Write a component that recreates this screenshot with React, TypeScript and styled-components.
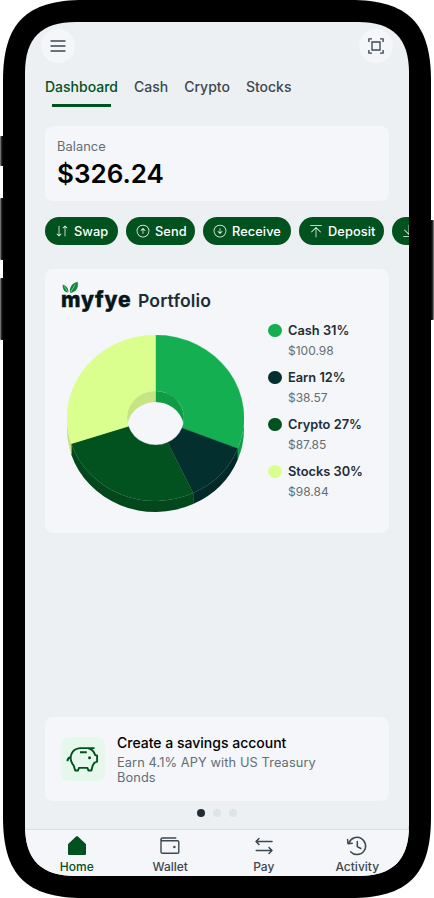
import React from 'react';
import styled, { createGlobalStyle } from 'styled-components';
import {
  PiArrowsDownUpLight,
  PiArrowCircleUpLight,
  PiArrowCircleDownLight,
  PiArrowLineUpLight,
  PiArrowLineDownLight,
} from 'react-icons/pi';

const c = {
  bg: '#ecf0f3',
  card: '#f4f6fa',
  green: '#02521f',
  ink: '#212d36',
  slate: '#3c4850',
  muted: '#636e74',
};

const GlobalStyle = createGlobalStyle`
  * { box-sizing: border-box; }
  body { margin: 0; background: #fff; font-family: Inter, 'Liberation Sans', sans-serif; }
  button { font: inherit; border: 0; padding: 0; background: none; }
  svg { display: block; flex: none; }
  h1, h2, p { margin: 0; }
`;

const Stage = styled.div`
  position: relative;
  width: 434px;
  height: 898px;
  overflow: hidden;
`;

const SideKey = styled.i<{ $side: 'left' | 'right'; $top: number; $length: number }>`
  position: absolute;
  ${p => p.$side}: 0;
  top: ${p => p.$top}px;
  width: 4px;
  height: ${p => p.$length}px;
  border-radius: 1px;
  background: linear-gradient(to ${p => p.$side}, #000 25%, #333 70%, #999 100%);
`;

const Bezel = styled.div`
  position: relative;
  width: 428px;
  height: 898px;
  margin-left: 3px;
  padding: 22px;
  background: #000;
  clip-path: path('M0 81C0 23 23 0 81 0H347C405 0 428 23 428 81V817C428 875 405 898 347 898H81C23 898 0 875 0 817Z');
`;

const Screen = styled.main`
  display: flex;
  flex-direction: column;
  width: 384px;
  height: 854px;
  background: ${c.bg};
  clip-path: path('M0 51C0 16 16 0 51 0H333C368 0 384 16 384 51V803C384 838 368 854 333 854H51C16 854 0 838 0 803Z');
`;

const Header = styled.header`
  display: flex;
  justify-content: space-between;
  padding: 7px 16px 0;
`;

const RoundButton = styled.button`
  display: grid;
  place-items: center;
  width: 34px;
  height: 34px;
  border-radius: 50%;
  background: ${c.card};
  color: ${c.slate};
`;

const Tabs = styled.nav`
  display: flex;
  gap: 16px;
  height: 44px;
  padding: 14px 20px 0;
`;

const Tab = styled.button<{ $active?: boolean }>`
  display: flex;
  flex-direction: column;
  align-items: center;
  justify-content: space-between;
  height: 30px;
  font-size: 14px;
  line-height: 20px;
  font-weight: 500;
  white-space: nowrap;
  color: ${p => (p.$active ? c.green : c.slate)};
  &::after {
    content: '';
    width: 59px;
    height: 3px;
    margin: 0 -20px;
    background: ${p => (p.$active ? c.green : 'transparent')};
  }
`;

const Balance = styled.section`
  height: 75px;
  margin: 19px 20px 0;
  padding: 12px;
  border-radius: 8px;
  background: ${c.card};
`;

const BalanceLabel = styled.p`
  font-size: 12.8px;
  line-height: 18px;
  letter-spacing: 0.08px;
  color: ${c.muted};
`;

const BalanceValue = styled.h1`
  margin-top: 1px;
  font-size: 26px;
  line-height: 34px;
  font-weight: 600;
  color: #000;
`;

const Actions = styled.div`
  display: flex;
  gap: 8px;
  margin-top: 16px;
  padding-left: 20px;
  overflow: hidden;
`;

const Action = styled.button<{ $width: number }>`
  display: flex;
  align-items: center;
  flex: none;
  gap: 4px;
  width: ${p => p.$width}px;
  height: 28px;
  padding-left: 9px;
  border-radius: 14px;
  background: ${c.green};
  color: #fff;
  font-size: 12.8px;
  font-weight: 500;
  letter-spacing: 0.08px;
`;

const Portfolio = styled.section`
  height: 264px;
  margin: 24px 20px 0;
  padding: 12px 16px;
  border-radius: 8px;
  background: ${c.card};
`;

const PortfolioHead = styled.div`
  display: flex;
  height: 40px;
`;

const Logo = styled.div`
  position: relative;
  width: 77px;
  padding-top: 5px;
  color: #06171a;
  font-size: 21px;
  line-height: 28px;
  font-weight: 800;
  letter-spacing: 0.85px;
  -webkit-text-stroke: 0.4px #06171a;
`;

const Leaves = styled.svg`
  position: absolute;
  left: 0;
  top: 0;
`;

const PortfolioTitle = styled.h2`
  padding-top: 8px;
  font-size: 17.6px;
  line-height: 24px;
  font-weight: 600;
  letter-spacing: 0.12px;
  color: ${c.ink};
`;

const ChartRow = styled.div`
  display: flex;
`;

const Donut = styled.svg`
  margin: 14px 0 0 6px;
`;

const Legend = styled.ul`
  display: grid;
  grid-auto-rows: 47px;
  margin: 0 0 0 24px;
  padding: 0;
  list-style: none;
`;

const LegendItem = styled.li`
  display: grid;
  grid-template-columns: 14px auto;
  column-gap: 6px;
  align-content: start;
  align-items: center;
`;

const Swatch = styled.i<{ $color: string }>`
  width: 13.5px;
  height: 13.5px;
  margin-top: -1px;
  border-radius: 50%;
  background: ${p => p.$color};
`;

const LegendName = styled.span`
  font-size: 12.8px;
  line-height: 20px;
  font-weight: 600;
  color: ${c.ink};
`;

const LegendValue = styled.span`
  grid-column: 2;
  font-size: 12px;
  line-height: 19px;
  color: ${c.muted};
`;

const Promo = styled.section`
  display: flex;
  align-items: center;
  gap: 12px;
  height: 84px;
  margin: auto 20px 0;
  padding: 0 16px;
  border-radius: 8px;
  background: ${c.card};
`;

const PromoIcon = styled.div`
  display: grid;
  place-items: center;
  width: 44px;
  height: 44px;
  border-radius: 8px;
  background: #e5f8eb;
`;

const PromoTitle = styled.h2`
  font-size: 14px;
  line-height: 20px;
  font-weight: 500;
  color: #000;
`;

const PromoText = styled.p`
  width: 220px;
  margin-top: 2px;
  font-size: 12.8px;
  line-height: 15px;
  letter-spacing: 0.1px;
  color: ${c.muted};
`;

const Dots = styled.div`
  display: flex;
  justify-content: center;
  gap: 8px;
  padding: 8px 0 12px;
`;

const Dot = styled.i<{ $active?: boolean }>`
  width: 8px;
  height: 8px;
  border-radius: 50%;
  background: ${p => (p.$active ? c.ink : '#dde4e7')};
`;

const BottomNav = styled.nav`
  display: grid;
  grid-template-columns: repeat(4, 1fr);
  height: 47px;
  padding: 4px 5px 0;
  border-top: 1px solid #d9e0e4;
  background: ${c.card};
`;

const NavItem = styled.button<{ $active?: boolean }>`
  display: flex;
  flex-direction: column;
  align-items: center;
  color: ${p => (p.$active ? c.green : c.slate)};
  font-size: 12px;
  line-height: 16px;
  font-weight: 500;
  & > span { margin-top: 1px; }
`;

const actions = [
  { label: 'Swap', width: 73, Icon: PiArrowsDownUpLight },
  { label: 'Send', width: 69, Icon: PiArrowCircleUpLight },
  { label: 'Receive', width: 88, Icon: PiArrowCircleDownLight },
  { label: 'Deposit', width: 85, Icon: PiArrowLineUpLight },
];

const holdings = [
  { name: 'Cash', pct: 31, value: '$100.98', color: '#14af50', shade: '#109c45' },
  { name: 'Earn', pct: 12, value: '$38.57', color: '#03302e', shade: '#022827' },
  { name: 'Crypto', pct: 27, value: '$87.85', color: '#025220', shade: '#02481c' },
  { name: 'Stocks', pct: 30, value: '$98.84', color: '#dbff8f', shade: '#c6e482' },
];

const CX = 88.5, CY = 83, RX = 88.5, RY = 83, HX = 28.5, HY = 27, DEPTH = 11;
const pt = (deg: number, rx: number, ry: number, dy = 0) => {
  const a = (deg * Math.PI) / 180;
  return `${(CX + rx * Math.sin(a)).toFixed(2)} ${(CY + dy - ry * Math.cos(a)).toFixed(2)}`;
};

function PortfolioChart() {
  let sum = 0;
  const slices = holdings.map(h => {
    const from = sum * 3.6;
    sum += h.pct;
    return { ...h, from, to: sum * 3.6 };
  });
  return (
    <Donut width="177" height="178" viewBox="0 0 177 178">
      {slices.map(s => {
        const a = Math.max(s.from, 90);
        const b = Math.min(s.to, 270);
        return (
          <path key={s.name} fill={s.shade}
            d={`M${pt(a, RX, RY)}A${RX} ${RY} 0 0 1 ${pt(b, RX, RY)}L${pt(b, RX, RY, DEPTH)}A${RX} ${RY} 0 0 0 ${pt(a, RX, RY, DEPTH)}Z`} />
        );
      })}
      {slices.map(s => (
        <path key={s.name} fill={s.color} stroke={s.color} strokeWidth=".3"
          d={`M${pt(s.from, RX, RY)}A${RX} ${RY} 0 0 1 ${pt(s.to, RX, RY)}L${pt(s.to, HX, HY)}A${HX} ${HY} 0 0 0 ${pt(s.from, HX, HY)}Z`} />
      ))}
      <path fill={holdings[0].shade} d="M88.5 56A28.5 27 0 0 1 116.4 88.5A28.5 27 0 0 0 88.5 67Z" />
      <path fill={holdings[3].shade} d="M88.5 56A28.5 27 0 0 0 60.6 88.5A28.5 27 0 0 1 88.5 67Z" />
    </Donut>
  );
}

const MenuIcon = () => (
  <svg width="16" height="14" viewBox="0 0 16 14" fill="none" stroke="currentColor" strokeWidth="1.3" strokeLinecap="round">
    <path d="M1 2h14M1 7h14M1 12h14" />
  </svg>
);

const ScanIcon = () => (
  <svg width="18" height="18" viewBox="0 0 18 18" fill="none" stroke="currentColor" strokeWidth="1.35">
    <path d="M1.9 5V1.9H5M13 1.9h3.1V5M16.1 13v3.1H13M5 16.1H1.9V13M5 5h8v8H5z" />
  </svg>
);

const PiggyIcon = () => (
  <svg width="34" height="28" viewBox="0 0 34 28" fill="none" stroke={c.green} strokeWidth="1.9" strokeLinejoin="round">
    <path d="M1.4 16.3c.1-2.6 1.5-3.8 3.2-4M28.5 3.1H15C7.5 3.1 4.6 8.6 4.6 13.5c0 3.4 1.9 5.2 3.1 7.1l1.5 4.9h2.8l1-2.6h8.4l1 2.6h3l1.3-5 1.9-2.9 2.5-.9V10.6l-2-.6C27.9 6.3 25.4 3.8 22.3 3.2M14 7.2h6.8" />
    <circle cx="23.5" cy="12.8" r="1.5" fill={c.green} stroke="none" />
  </svg>
);

const HomeIcon = () => (
  <svg width="24" height="24" viewBox="0 0 24 24" fill="currentColor">
    <path d="M12 2.2c.35 0 .7.14.95.39l7.65 7.26c.25.24.4.6.4.95V20a1 1 0 0 1-1 1H4a1 1 0 0 1-1-1v-9.2c0-.35.15-.71.4-.95l7.65-7.26c.25-.25.6-.39.95-.39Z" />
  </svg>
);

const WalletIcon = () => (
  <svg width="24" height="24" viewBox="0 0 24 24" fill="none" stroke="currentColor" strokeWidth="1.4" strokeLinecap="round">
    <path d="M17.8 4H4.5C3.5 4 3 4.5 3 5.3s.5 1.5 1.5 1.5h15c.9 0 1.3.4 1.3 1.2v10c0 .9-.4 1.3-1.3 1.3h-15c-1 0-1.5-.5-1.5-1.4V5.3" />
    <circle cx="16.4" cy="13" r="1.25" fill="currentColor" stroke="none" />
  </svg>
);

const PayIcon = () => (
  <svg width="24" height="24" viewBox="0 0 24 24" fill="none" stroke="currentColor" strokeWidth="1.5" strokeLinecap="round" strokeLinejoin="round">
    <path d="M20 7.5H4.2M7 4.5l-3 3 3 3M4.2 16.5H20M17 13.5l3 3-3 3" />
  </svg>
);

const ActivityIcon = () => (
  <svg width="24" height="24" viewBox="0 0 24 24" fill="none" stroke="currentColor" strokeWidth="1.5" strokeLinecap="round" strokeLinejoin="round">
    <path d="M5.8 17.9A8.6 8.6 0 1 0 4.1 8.7M2.6 5.5l.4 4.2 4.2-.4M12.3 7.5v5.2l3.5 1.8" />
  </svg>
);

const navItems = [
  { label: 'Home', Icon: HomeIcon },
  { label: 'Wallet', Icon: WalletIcon },
  { label: 'Pay', Icon: PayIcon },
  { label: 'Activity', Icon: ActivityIcon },
];

export default function App() {
  return (
    <Stage>
      <GlobalStyle />
      <SideKey $side="left" $top={136} $length={30} />
      <SideKey $side="left" $top={198} $length={62} />
      <SideKey $side="left" $top={278} $length={62} />
      <SideKey $side="right" $top={220} $length={100} />
      <Bezel>
        <Screen>
          <Header>
            <RoundButton aria-label="Menu"><MenuIcon /></RoundButton>
            <RoundButton aria-label="Scan"><ScanIcon /></RoundButton>
          </Header>
          <Tabs>
            {['Dashboard', 'Cash', 'Crypto', 'Stocks'].map((t, i) => (
              <Tab key={t} $active={i === 0}>{t}</Tab>
            ))}
          </Tabs>
          <Balance>
            <BalanceLabel>Balance</BalanceLabel>
            <BalanceValue>$326.24</BalanceValue>
          </Balance>
          <Actions>
            {actions.map(({ label, width, Icon }) => (
              <Action key={label} $width={width}><Icon size={16} />{label}</Action>
            ))}
            <Action $width={96} aria-label="Withdraw"><PiArrowLineDownLight size={16} /></Action>
          </Actions>
          <Portfolio>
            <PortfolioHead>
              <Logo>
                myfye
                <Leaves width="18" height="15" viewBox="0 0 18 15" fill="#12863c">
                  <path d="M7.2 11.6C2.8 10.8 1.5 7.9 1.7 3.4 5.7 5 8 7.5 7.2 11.6Z" />
                  <path d="M9 12.2C8.1 6.9 10.6 2.3 16.6.8 18 6.8 15 11.2 9 12.2Z" />
                  <path d="M3.4 5.6l3.7 5.8M14.3 3.6L9 12" stroke="#f4f6fa" strokeWidth=".5" />
                </Leaves>
              </Logo>
              <PortfolioTitle>Portfolio</PortfolioTitle>
            </PortfolioHead>
            <ChartRow>
              <PortfolioChart />
              <Legend>
                {holdings.map(h => (
                  <LegendItem key={h.name}>
                    <Swatch $color={h.color} />
                    <LegendName>{h.name} {h.pct}%</LegendName>
                    <LegendValue>{h.value}</LegendValue>
                  </LegendItem>
                ))}
              </Legend>
            </ChartRow>
          </Portfolio>
          <Promo>
            <PromoIcon><PiggyIcon /></PromoIcon>
            <div>
              <PromoTitle>Create a savings account</PromoTitle>
              <PromoText>Earn 4.1% APY with US Treasury Bonds</PromoText>
            </div>
          </Promo>
          <Dots><Dot $active /><Dot /><Dot /></Dots>
          <BottomNav>
            {navItems.map(({ label, Icon }, i) => (
              <NavItem key={label} $active={i === 0}><Icon /><span>{label}</span></NavItem>
            ))}
          </BottomNav>
        </Screen>
      </Bezel>
    </Stage>
  );
}
